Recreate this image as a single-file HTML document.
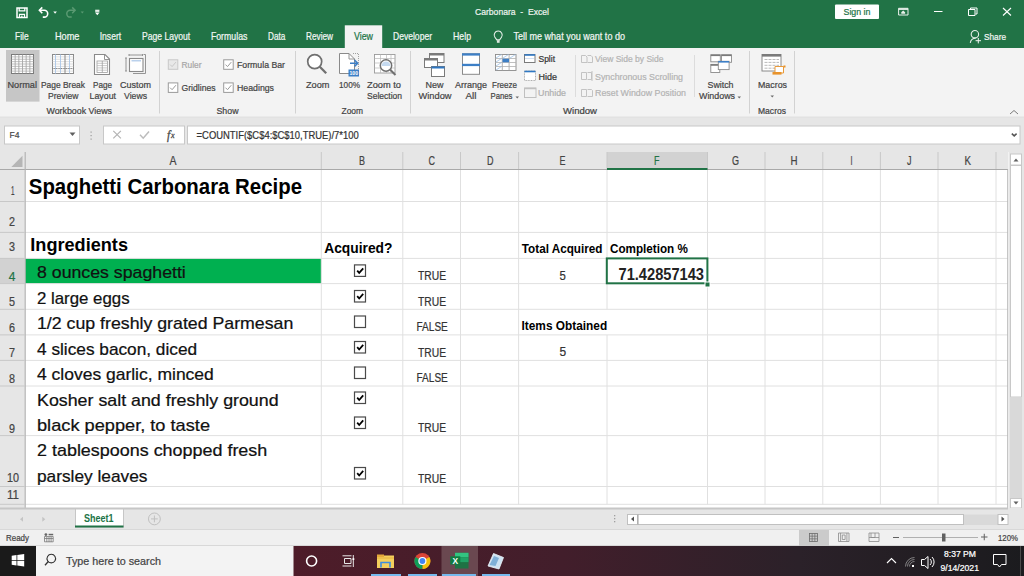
<!DOCTYPE html>
<html><head><meta charset="utf-8"><style>
html,body{margin:0;padding:0;width:1024px;height:576px;overflow:hidden;background:#fff}
svg{display:block;font-family:"Liberation Sans",sans-serif}
</style></head><body>
<svg width="1024" height="576" viewBox="0 0 1024 576">
<rect x="0" y="0" width="1024" height="48" fill="#217346" />
<path d="M17 8h10v9.6h-10z" stroke="#ffffff" fill="none" stroke-width="1.5" />
<path d="M19.2 8v2.8h5.6v-2.8" stroke="#ffffff" fill="none" stroke-width="1.3" />
<path d="M19.5 17.6v-3.3h5v3.3" stroke="#ffffff" fill="none" stroke-width="1.2" />
<rect x="21.2" y="15.6" width="1.3" height="2" fill="#ffffff" />
<path d="M39.5 10.3h4.8a3.4 3.4 0 0 1 0 6.8h-1.5" stroke="#ffffff" fill="none" stroke-width="1.6" />
<path d="M42.3 7.4l-2.9 2.9l2.9 2.9" stroke="#ffffff" fill="none" stroke-width="1.6" />
<path d="M53.3 11.5h3.6l-1.8 2.2z" stroke="none" fill="#ffffff" stroke-width="1" />
<path d="M75 10.3h-4.8a3.4 3.4 0 0 0 0 6.8h1.5" stroke="#5a9a72" fill="none" stroke-width="1.5" />
<path d="M72.2 7.4l2.9 2.9l-2.9 2.9" stroke="#5a9a72" fill="none" stroke-width="1.5" />
<path d="M80.7 11.5h3.2l-1.6 2z" stroke="none" fill="#5a9a72" stroke-width="1" />
<rect x="95.2" y="9.7" width="4.2" height="2.2" fill="#e8f0ea" />
<path d="M95 12.6h4.6l-2.3 2.6z" stroke="none" fill="#ffffff" stroke-width="1" />
<text x="475.00" y="15.00" font-size="9.88" fill="#eef3ef" style="white-space:pre" stroke="#eef3ef" stroke-width="0.22" textLength="74.00" lengthAdjust="spacingAndGlyphs">Carbonara  -  Excel</text>
<rect x="835" y="4.5" width="44" height="14.5" fill="#ffffff" rx="1"/>
<text x="843.50" y="15.20" font-size="9.88" fill="#217346" style="white-space:pre" stroke="#217346" stroke-width="0.22" textLength="27.00" lengthAdjust="spacingAndGlyphs">Sign in</text>
<path d="M898.6 8.3h9.4v6.7h-9.4z" stroke="#e8f0ea" fill="none" stroke-width="1" />
<rect x="898.6" y="8.3" width="9.4" height="1.6" fill="#e8f0ea" />
<path d="M901.3 13.8h3.8v-1.6h-3.8zM903.2 10.6l-2.2 1.8h4.4z" stroke="none" fill="#e8f0ea" stroke-width="1" />
<line x1="934" y1="11.5" x2="942.5" y2="11.5" stroke="#ffffff" stroke-width="1" />
<path d="M968.5 9.5h6.5v6h-6.5z" stroke="#ffffff" fill="none" stroke-width="1" />
<path d="M970.5 9.5v-1.5h6.5v6h-1.5" stroke="#ffffff" fill="none" stroke-width="1" />
<path d="M1003 8l8 7.5M1011 8l-8 7.5" stroke="#ffffff" fill="none" stroke-width="1.1" />
<text x="15.10" y="39.90" font-size="10.17" fill="#f2f6f3" style="white-space:pre" stroke="#f2f6f3" stroke-width="0.22" textLength="13.50" lengthAdjust="spacingAndGlyphs">File</text>
<text x="54.90" y="39.90" font-size="10.17" fill="#f2f6f3" style="white-space:pre" stroke="#f2f6f3" stroke-width="0.22" textLength="24.50" lengthAdjust="spacingAndGlyphs">Home</text>
<text x="99.70" y="39.90" font-size="10.17" fill="#f2f6f3" style="white-space:pre" stroke="#f2f6f3" stroke-width="0.22" textLength="21.50" lengthAdjust="spacingAndGlyphs">Insert</text>
<text x="142.00" y="39.90" font-size="10.17" fill="#f2f6f3" style="white-space:pre" stroke="#f2f6f3" stroke-width="0.22" textLength="48.20" lengthAdjust="spacingAndGlyphs">Page Layout</text>
<text x="210.90" y="39.90" font-size="10.17" fill="#f2f6f3" style="white-space:pre" stroke="#f2f6f3" stroke-width="0.22" textLength="36.50" lengthAdjust="spacingAndGlyphs">Formulas</text>
<text x="268.00" y="39.90" font-size="10.17" fill="#f2f6f3" style="white-space:pre" stroke="#f2f6f3" stroke-width="0.22" textLength="17.30" lengthAdjust="spacingAndGlyphs">Data</text>
<text x="306.00" y="39.90" font-size="10.17" fill="#f2f6f3" style="white-space:pre" stroke="#f2f6f3" stroke-width="0.22" textLength="27.00" lengthAdjust="spacingAndGlyphs">Review</text>
<text x="393.00" y="39.90" font-size="10.17" fill="#f2f6f3" style="white-space:pre" stroke="#f2f6f3" stroke-width="0.22" textLength="39.00" lengthAdjust="spacingAndGlyphs">Developer</text>
<text x="453.00" y="39.90" font-size="10.17" fill="#f2f6f3" style="white-space:pre" stroke="#f2f6f3" stroke-width="0.22" textLength="18.00" lengthAdjust="spacingAndGlyphs">Help</text>
<rect x="344.8" y="25.3" width="37.4" height="23" fill="#f3f3f3" />
<text x="354.00" y="39.90" font-size="10.17" fill="#217346" style="white-space:pre" stroke="#217346" stroke-width="0.22" textLength="19.00" lengthAdjust="spacingAndGlyphs">View</text>
<path d="M498.2 31a4 4 0 0 1 3.3 6.3l-1.9 2.6h-2.8l-1.9-2.6a4 4 0 0 1 3.3-6.3z" stroke="#e6efe9" fill="none" stroke-width="1.1" />
<rect x="496.9" y="40.2" width="2.7" height="2.6" fill="#dfe9e2" />
<text x="513.40" y="39.90" font-size="10.17" fill="#f2f6f3" style="white-space:pre" stroke="#f2f6f3" stroke-width="0.22" textLength="111.60" lengthAdjust="spacingAndGlyphs">Tell me what you want to do</text>
<path d="M974.9 30.5a3.7 3.7 0 1 1 0 7.4a3.7 3.7 0 1 1 0-7.4z" stroke="#e6efe9" fill="none" stroke-width="1.1" />
<path d="M970.3 42.8a5.5 5.5 0 0 1 5.4-4.6" stroke="#e6efe9" fill="none" stroke-width="1.1" />
<path d="M978.3 38v5.4M975.6 40.7h5.4" stroke="#f2f6f3" fill="none" stroke-width="1" />
<text x="984.00" y="39.80" font-size="9.74" fill="#f2f6f3" style="white-space:pre" stroke="#f2f6f3" stroke-width="0.22" textLength="22.00" lengthAdjust="spacingAndGlyphs">Share</text>
<rect x="0" y="48" width="1024" height="69.5" fill="#f3f3f3" />
<line x1="0" y1="117.2" x2="1024" y2="117.2" stroke="#d6d6d6" stroke-width="1" />
<rect x="6" y="50" width="33.5" height="51.6" fill="#c6c6c6" />
<rect x="11.5" y="54.5" width="22" height="19" fill="#ffffff" stroke="#7a7a7a" stroke-width="1"/>
<line x1="15.166666666666666" y1="54.5" x2="15.166666666666666" y2="73.5" stroke="#9a9a9a" stroke-width="0.8" />
<line x1="18.833333333333332" y1="54.5" x2="18.833333333333332" y2="73.5" stroke="#9a9a9a" stroke-width="0.8" />
<line x1="22.5" y1="54.5" x2="22.5" y2="73.5" stroke="#9a9a9a" stroke-width="0.8" />
<line x1="26.166666666666664" y1="54.5" x2="26.166666666666664" y2="73.5" stroke="#9a9a9a" stroke-width="0.8" />
<line x1="29.833333333333332" y1="54.5" x2="29.833333333333332" y2="73.5" stroke="#9a9a9a" stroke-width="0.8" />
<line x1="11.5" y1="56.875" x2="33.5" y2="56.875" stroke="#a8a8a8" stroke-width="0.7" />
<line x1="11.5" y1="59.25" x2="33.5" y2="59.25" stroke="#a8a8a8" stroke-width="0.7" />
<line x1="11.5" y1="61.625" x2="33.5" y2="61.625" stroke="#a8a8a8" stroke-width="0.7" />
<line x1="11.5" y1="64.0" x2="33.5" y2="64.0" stroke="#a8a8a8" stroke-width="0.7" />
<line x1="11.5" y1="66.375" x2="33.5" y2="66.375" stroke="#a8a8a8" stroke-width="0.7" />
<line x1="11.5" y1="68.75" x2="33.5" y2="68.75" stroke="#a8a8a8" stroke-width="0.7" />
<line x1="11.5" y1="71.125" x2="33.5" y2="71.125" stroke="#a8a8a8" stroke-width="0.7" />
<rect x="52.5" y="54.5" width="21" height="19" fill="#ffffff" stroke="#8a8a8a" stroke-width="1"/>
<line x1="52.5" y1="56.875" x2="73.5" y2="56.875" stroke="#c8c8c8" stroke-width="0.6" />
<line x1="52.5" y1="59.25" x2="73.5" y2="59.25" stroke="#c8c8c8" stroke-width="0.6" />
<line x1="52.5" y1="61.625" x2="73.5" y2="61.625" stroke="#c8c8c8" stroke-width="0.6" />
<line x1="52.5" y1="64.0" x2="73.5" y2="64.0" stroke="#c8c8c8" stroke-width="0.6" />
<line x1="52.5" y1="66.375" x2="73.5" y2="66.375" stroke="#c8c8c8" stroke-width="0.6" />
<line x1="52.5" y1="68.75" x2="73.5" y2="68.75" stroke="#c8c8c8" stroke-width="0.6" />
<line x1="52.5" y1="71.125" x2="73.5" y2="71.125" stroke="#c8c8c8" stroke-width="0.6" />
<line x1="55.5" y1="54.5" x2="55.5" y2="73.5" stroke="#a9c6e8" stroke-width="0.9" />
<line x1="60.5" y1="54.5" x2="60.5" y2="73.5" stroke="#a9c6e8" stroke-width="0.9" />
<line x1="69.5" y1="54.5" x2="69.5" y2="73.5" stroke="#a9c6e8" stroke-width="0.9" />
<line x1="65" y1="54.5" x2="65" y2="73.5" stroke="#7a7a7a" stroke-width="0.9" />
<line x1="52.5" y1="68.5" x2="73.5" y2="68.5" stroke="#6a6a6a" stroke-width="0.8" stroke-dasharray="1 0.7"/>
<path d="M94.5 54.5h10.5l4.5 4.5v15.5h-15z" stroke="#8a8a8a" fill="#ffffff" stroke-width="1.1" />
<path d="M104.5 54.5v5h5" stroke="#8a8a8a" fill="none" stroke-width="0.9" />
<rect x="97" y="61" width="10.5" height="11.5" fill="none" stroke="#a0a0a0" stroke-width="0.8"/>
<line x1="97" y1="63.3" x2="107.5" y2="63.3" stroke="#b4b4b4" stroke-width="0.7" />
<line x1="97" y1="65.6" x2="107.5" y2="65.6" stroke="#b4b4b4" stroke-width="0.7" />
<line x1="97" y1="67.9" x2="107.5" y2="67.9" stroke="#b4b4b4" stroke-width="0.7" />
<line x1="97" y1="70.2" x2="107.5" y2="70.2" stroke="#b4b4b4" stroke-width="0.7" />
<line x1="102.3" y1="61" x2="102.3" y2="72.5" stroke="#a0a0a0" stroke-width="0.8" />
<path d="M129 55h13.5M129 54v2M142.5 54v2" stroke="#8a8a8a" fill="none" stroke-width="0.9" />
<path d="M126 58v13M125 58h2M125 71h2" stroke="#8a8a8a" fill="none" stroke-width="0.9" />
<path d="M133 73.5h12.5v-19h-2" stroke="#8a8a8a" fill="none" stroke-width="0.9" />
<rect x="129.5" y="58.5" width="13.5" height="13" fill="#ffffff" stroke="#8a8a8a" stroke-width="1.1"/>
<line x1="131.5" y1="60.8" x2="141" y2="60.8" stroke="#a9c6e8" stroke-width="1.2" />
<text x="7.50" y="87.70" font-size="9.59" fill="#444444" style="white-space:pre" stroke="#444444" stroke-width="0.22" textLength="29.50" lengthAdjust="spacingAndGlyphs">Normal</text>
<text x="41.00" y="87.70" font-size="9.59" fill="#444444" style="white-space:pre" stroke="#444444" stroke-width="0.22" textLength="44.00" lengthAdjust="spacingAndGlyphs">Page Break</text>
<text x="48.00" y="99.40" font-size="9.59" fill="#444444" style="white-space:pre" stroke="#444444" stroke-width="0.22" textLength="30.50" lengthAdjust="spacingAndGlyphs">Preview</text>
<text x="93.00" y="87.70" font-size="9.59" fill="#444444" style="white-space:pre" stroke="#444444" stroke-width="0.22" textLength="19.00" lengthAdjust="spacingAndGlyphs">Page</text>
<text x="89.50" y="99.40" font-size="9.59" fill="#444444" style="white-space:pre" stroke="#444444" stroke-width="0.22" textLength="26.50" lengthAdjust="spacingAndGlyphs">Layout</text>
<text x="120.00" y="87.70" font-size="9.59" fill="#444444" style="white-space:pre" stroke="#444444" stroke-width="0.22" textLength="31.00" lengthAdjust="spacingAndGlyphs">Custom</text>
<text x="124.00" y="99.40" font-size="9.59" fill="#444444" style="white-space:pre" stroke="#444444" stroke-width="0.22" textLength="23.00" lengthAdjust="spacingAndGlyphs">Views</text>
<text x="46.50" y="113.50" font-size="9.01" fill="#444444" style="white-space:pre" stroke="#444444" stroke-width="0.22" textLength="65.50" lengthAdjust="spacingAndGlyphs">Workbook Views</text>
<line x1="159.5" y1="51" x2="159.5" y2="113.5" stroke="#d2d2d2" stroke-width="1" />
<rect x="168.3" y="59.8" width="9.5" height="9.5" fill="#e8e8e8" stroke="#c8c8c8" stroke-width="1"/>
<path d="M170.10000000000002 64.6l2 2l3.8-4.5" stroke="#c8c8c8" fill="none" stroke-width="1" />
<text x="181.50" y="67.80" font-size="9.30" fill="#a6a6a6" style="white-space:pre" stroke="#a6a6a6" stroke-width="0.22" textLength="20.00" lengthAdjust="spacingAndGlyphs">Ruler</text>
<rect x="223.7" y="59.8" width="9.5" height="9.5" fill="#ffffff" stroke="#9a9a9a" stroke-width="1"/>
<path d="M225.5 64.6l2 2l3.8-4.5" stroke="#9a9a9a" fill="none" stroke-width="1" />
<text x="237.00" y="67.80" font-size="9.30" fill="#444444" style="white-space:pre" stroke="#444444" stroke-width="0.22" textLength="48.00" lengthAdjust="spacingAndGlyphs">Formula Bar</text>
<rect x="168.3" y="82.9" width="9.5" height="9.5" fill="#ffffff" stroke="#9a9a9a" stroke-width="1"/>
<path d="M170.10000000000002 87.7l2 2l3.8-4.5" stroke="#9a9a9a" fill="none" stroke-width="1" />
<text x="181.50" y="91.20" font-size="9.30" fill="#444444" style="white-space:pre" stroke="#444444" stroke-width="0.22" textLength="34.10" lengthAdjust="spacingAndGlyphs">Gridlines</text>
<rect x="223.7" y="82.9" width="9.5" height="9.5" fill="#ffffff" stroke="#9a9a9a" stroke-width="1"/>
<path d="M225.5 87.7l2 2l3.8-4.5" stroke="#9a9a9a" fill="none" stroke-width="1" />
<text x="237.00" y="91.20" font-size="9.30" fill="#444444" style="white-space:pre" stroke="#444444" stroke-width="0.22" textLength="37.00" lengthAdjust="spacingAndGlyphs">Headings</text>
<text x="216.50" y="113.50" font-size="9.01" fill="#444444" style="white-space:pre" stroke="#444444" stroke-width="0.22" textLength="22.00" lengthAdjust="spacingAndGlyphs">Show</text>
<line x1="295.5" y1="51" x2="295.5" y2="113.5" stroke="#d2d2d2" stroke-width="1" />
<path d="M314.7 54.6a7 7 0 1 1 0 14a7 7 0 1 1 0-14z" stroke="#707070" fill="#ffffff" stroke-width="1.7" />
<line x1="319.8" y1="66.8" x2="326.2" y2="73.2" stroke="#707070" stroke-width="2.3" />
<path d="M339.5 53.5h9.5l5.5 5.5v14.5h-15z" stroke="#8a8a8a" fill="#ffffff" stroke-width="1" />
<path d="M349 53.5v5.5h5.5" stroke="#8a8a8a" fill="none" stroke-width="0.9" />
<path d="M353 53.5h5.5v15.5" stroke="#8a8a8a" fill="none" stroke-width="0.8" stroke-dasharray="1 1"/>
<path d="M350 63.2h7.5M354.5 60l3.2 3.2l-3.2 3.2" stroke="#3d7fc6" fill="none" stroke-width="1.5" />
<rect x="348.5" y="69.5" width="10.5" height="7" fill="#3d7fc6" />
<text x="353.75" y="75.2" font-size="5" fill="#fff" text-anchor="middle" font-weight="bold">100</text>
<rect x="374.5" y="54.5" width="20.5" height="18.5" fill="#ffffff" stroke="#9a9a9a" stroke-width="0.9"/>
<line x1="380.5" y1="54.5" x2="380.5" y2="73" stroke="#b8b8b8" stroke-width="0.7" />
<line x1="386.5" y1="54.5" x2="386.5" y2="73" stroke="#b8b8b8" stroke-width="0.7" />
<line x1="391" y1="54.5" x2="391" y2="73" stroke="#b8b8b8" stroke-width="0.7" />
<line x1="374.5" y1="58.5" x2="395" y2="58.5" stroke="#b8b8b8" stroke-width="0.7" />
<line x1="374.5" y1="63" x2="395" y2="63" stroke="#b8b8b8" stroke-width="0.7" />
<line x1="374.5" y1="68" x2="395" y2="68" stroke="#b8b8b8" stroke-width="0.7" />
<path d="M386 59.8a5.7 5.7 0 1 1 0 11.4a5.7 5.7 0 1 1 0-11.4z" stroke="#707070" fill="#ffffff" stroke-width="1.5" />
<path d="M381.5 66a4.5 4.5 0 0 1 9 0z" stroke="none" fill="#c5daf0" stroke-width="1" />
<line x1="390.2" y1="69.8" x2="395.5" y2="75" stroke="#707070" stroke-width="2" />
<text x="306.00" y="87.70" font-size="9.59" fill="#444444" style="white-space:pre" stroke="#444444" stroke-width="0.22" textLength="23.50" lengthAdjust="spacingAndGlyphs">Zoom</text>
<text x="339.00" y="87.70" font-size="9.59" fill="#444444" style="white-space:pre" stroke="#444444" stroke-width="0.22" textLength="21.00" lengthAdjust="spacingAndGlyphs">100%</text>
<text x="367.00" y="87.70" font-size="9.59" fill="#444444" style="white-space:pre" stroke="#444444" stroke-width="0.22" textLength="34.00" lengthAdjust="spacingAndGlyphs">Zoom to</text>
<text x="367.00" y="99.40" font-size="9.59" fill="#444444" style="white-space:pre" stroke="#444444" stroke-width="0.22" textLength="35.00" lengthAdjust="spacingAndGlyphs">Selection</text>
<text x="341.50" y="113.50" font-size="9.01" fill="#444444" style="white-space:pre" stroke="#444444" stroke-width="0.22" textLength="21.50" lengthAdjust="spacingAndGlyphs">Zoom</text>
<line x1="410.5" y1="51" x2="410.5" y2="113.5" stroke="#d2d2d2" stroke-width="1" />
<rect x="429.5" y="53.5" width="14.5" height="9" fill="#ffffff" stroke="#7a7a7a" stroke-width="1"/>
<line x1="429.5" y1="54.5" x2="444" y2="54.5" stroke="#7a7a7a" stroke-width="2" />
<rect x="424.5" y="58.5" width="13" height="9" fill="#ffffff" stroke="#7a7a7a" stroke-width="1"/>
<line x1="424.5" y1="59.5" x2="437.5" y2="59.5" stroke="#7a7a7a" stroke-width="2" />
<rect x="431.5" y="66.5" width="13" height="10" fill="#ffffff" stroke="#7a7a7a" stroke-width="1"/>
<line x1="431.5" y1="67.5" x2="444.5" y2="67.5" stroke="#2f78c4" stroke-width="2" />
<text x="425.50" y="87.70" font-size="9.59" fill="#444444" style="white-space:pre" stroke="#444444" stroke-width="0.22" textLength="18.00" lengthAdjust="spacingAndGlyphs">New</text>
<text x="418.50" y="99.40" font-size="9.59" fill="#444444" style="white-space:pre" stroke="#444444" stroke-width="0.22" textLength="33.00" lengthAdjust="spacingAndGlyphs">Window</text>
<rect x="462.5" y="53.8" width="17" height="20.5" fill="#ffffff" stroke="#8a8a8a" stroke-width="1"/>
<rect x="462" y="53.3" width="18" height="2.3" fill="#3d7fc6" />
<rect x="462" y="63.8" width="18" height="2.3" fill="#3d7fc6" />
<text x="455.00" y="87.70" font-size="9.59" fill="#444444" style="white-space:pre" stroke="#444444" stroke-width="0.22" textLength="32.00" lengthAdjust="spacingAndGlyphs">Arrange</text>
<text x="465.50" y="99.40" font-size="9.59" fill="#444444" style="white-space:pre" stroke="#444444" stroke-width="0.22" textLength="11.00" lengthAdjust="spacingAndGlyphs">All</text>
<rect x="495.5" y="54.5" width="20.5" height="16" fill="#ffffff" stroke="#8a8a8a" stroke-width="0.9"/>
<line x1="502.3" y1="54.5" x2="502.3" y2="70.5" stroke="#a0a0a0" stroke-width="0.8" />
<line x1="509.1" y1="54.5" x2="509.1" y2="70.5" stroke="#a0a0a0" stroke-width="0.8" />
<line x1="495.5" y1="58.5" x2="516" y2="58.5" stroke="#b0b0b0" stroke-width="0.8" />
<line x1="495.5" y1="62.5" x2="516" y2="62.5" stroke="#b0b0b0" stroke-width="0.8" />
<line x1="495.5" y1="66.5" x2="516" y2="66.5" stroke="#b0b0b0" stroke-width="0.8" />
<path d="M496 58l5.5-3.5M503 58l5.5-3.5M510 58l5.5-3.5M496 62l5.5-3.5M496 66l5.5-3.5M496 70l5.5-3.5" stroke="#9cc0e6" fill="none" stroke-width="0.8" />
<rect x="502.5" y="58.7" width="6.5" height="3.6" fill="#3d7fc6" />
<text x="492.00" y="87.70" font-size="9.59" fill="#444444" style="white-space:pre" stroke="#444444" stroke-width="0.22" textLength="25.00" lengthAdjust="spacingAndGlyphs">Freeze</text>
<text x="490.50" y="99.40" font-size="9.59" fill="#444444" style="white-space:pre" stroke="#444444" stroke-width="0.22" textLength="22.00" lengthAdjust="spacingAndGlyphs">Panes</text>
<path d="M515.5 96.5h3.5l-1.75 2z" stroke="none" fill="#6a6a6a" stroke-width="1" />
<rect x="524.5" y="54.5" width="10.5" height="8" fill="#ffffff" stroke="#7a7a7a" stroke-width="1"/>
<line x1="524.5" y1="55" x2="535" y2="55" stroke="#2f78c4" stroke-width="1.6" />
<line x1="525.5" y1="58.5" x2="534" y2="58.5" stroke="#8fb4e0" stroke-width="0.8" stroke-dasharray="1 1"/>
<text x="538.50" y="61.70" font-size="9.01" fill="#333333" style="white-space:pre" stroke="#333333" stroke-width="0.22" textLength="16.50" lengthAdjust="spacingAndGlyphs">Split</text>
<rect x="524.5" y="71" width="11" height="9.5" fill="#ffffff" stroke="#9a9a9a" stroke-width="0.8" stroke-dasharray="1 0.6"/>
<line x1="524.5" y1="71.5" x2="535.5" y2="71.5" stroke="#2f78c4" stroke-width="1.6" />
<text x="538.50" y="79.50" font-size="9.01" fill="#333333" style="white-space:pre" stroke="#333333" stroke-width="0.22" textLength="18.50" lengthAdjust="spacingAndGlyphs">Hide</text>
<rect x="524.5" y="88" width="11.5" height="9.5" fill="#f3f3f3" stroke="#c0c0c0" stroke-width="1"/>
<line x1="524.5" y1="88.5" x2="536" y2="88.5" stroke="#c0c0c0" stroke-width="1.5" />
<text x="538.00" y="96.40" font-size="9.01" fill="#b0b0b0" style="white-space:pre" stroke="#b0b0b0" stroke-width="0.22" textLength="28.00" lengthAdjust="spacingAndGlyphs">Unhide</text>
<line x1="575.5" y1="55" x2="575.5" y2="97" stroke="#dcdcdc" stroke-width="1" />
<path d="M581.5 55.5h4l1.5 1.5v5.5h-5.5zM587.5 55.5h3.5l1.5 1.5v5.5h-5" stroke="#bdbdbd" fill="none" stroke-width="0.9" />
<text x="595.00" y="61.70" font-size="9.01" fill="#b4b4b4" style="white-space:pre" stroke="#b4b4b4" stroke-width="0.22" textLength="68.50" lengthAdjust="spacingAndGlyphs">View Side by Side</text>
<path d="M581.5 72.5h5v7h-5zM587.5 72.5h4v7h-4M592 71v10" stroke="#bdbdbd" fill="none" stroke-width="0.9" />
<text x="595.00" y="79.50" font-size="9.01" fill="#b4b4b4" style="white-space:pre" stroke="#b4b4b4" stroke-width="0.22" textLength="88.00" lengthAdjust="spacingAndGlyphs">Synchronous Scrolling</text>
<path d="M581.5 89.5h5v7h-5zM587.5 89.5h4l1 1v6h-5" stroke="#bdbdbd" fill="none" stroke-width="0.9" />
<text x="595.00" y="96.40" font-size="9.01" fill="#b4b4b4" style="white-space:pre" stroke="#b4b4b4" stroke-width="0.22" textLength="91.00" lengthAdjust="spacingAndGlyphs">Reset Window Position</text>
<line x1="694.5" y1="55" x2="694.5" y2="97" stroke="#dcdcdc" stroke-width="1" />
<rect x="710.8" y="54.8" width="9.5" height="7" fill="#ffffff" stroke="#8a8a8a" stroke-width="0.9"/>
<line x1="710.8" y1="55.3" x2="720.3" y2="55.3" stroke="#7a7a7a" stroke-width="1.6" />
<rect x="721.5" y="54.8" width="10" height="7.5" fill="#ffffff" stroke="#8a8a8a" stroke-width="0.9"/>
<line x1="721.5" y1="55.3" x2="731.5" y2="55.3" stroke="#7a7a7a" stroke-width="1.6" />
<rect x="710.8" y="64.5" width="9" height="8" fill="#ffffff" stroke="#8a8a8a" stroke-width="0.9"/>
<line x1="710.8" y1="65" x2="719.8" y2="65" stroke="#7a7a7a" stroke-width="1.6" />
<rect x="718.3" y="61.3" width="10.8" height="8.3" fill="#ffffff" stroke="#8a8a8a" stroke-width="0.9"/>
<line x1="718.3" y1="61.8" x2="729.1" y2="61.8" stroke="#3d7fc6" stroke-width="1.6" />
<text x="707.50" y="87.70" font-size="9.59" fill="#444444" style="white-space:pre" stroke="#444444" stroke-width="0.22" textLength="26.00" lengthAdjust="spacingAndGlyphs">Switch</text>
<text x="699.00" y="99.40" font-size="9.59" fill="#444444" style="white-space:pre" stroke="#444444" stroke-width="0.22" textLength="36.00" lengthAdjust="spacingAndGlyphs">Windows</text>
<path d="M737.5 96.5h3.5l-1.75 2z" stroke="none" fill="#6a6a6a" stroke-width="1" />
<line x1="749.5" y1="51" x2="749.5" y2="113.5" stroke="#d2d2d2" stroke-width="1" />
<text x="563.00" y="113.50" font-size="9.01" fill="#444444" style="white-space:pre" stroke="#444444" stroke-width="0.22" textLength="34.00" lengthAdjust="spacingAndGlyphs">Window</text>
<rect x="762" y="54.5" width="19" height="16.5" fill="#ffffff" stroke="#8a8a8a" stroke-width="1"/>
<rect x="762" y="54" width="19" height="2.6" fill="#7a7a7a" />
<line x1="764.5" y1="59.5" x2="779" y2="59.5" stroke="#a8a8a8" stroke-width="0.8" stroke-dasharray="3 1"/>
<line x1="764.5" y1="62.4" x2="779" y2="62.4" stroke="#a8a8a8" stroke-width="0.8" stroke-dasharray="3 1"/>
<line x1="764.5" y1="65.3" x2="779" y2="65.3" stroke="#a8a8a8" stroke-width="0.8" stroke-dasharray="3 1"/>
<line x1="764.5" y1="68.2" x2="779" y2="68.2" stroke="#a8a8a8" stroke-width="0.8" stroke-dasharray="3 1"/>
<path d="M775 66.5h8.5v6.5h-8.5z" stroke="#e99a3a" fill="#ffffff" stroke-width="1" />
<rect x="772.5" y="72" width="9" height="2.6" fill="#e8932b" />
<rect x="783.5" y="65.5" width="2" height="2" fill="#e8932b" />
<text x="758.00" y="87.70" font-size="9.59" fill="#444444" style="white-space:pre" stroke="#444444" stroke-width="0.22" textLength="29.00" lengthAdjust="spacingAndGlyphs">Macros</text>
<path d="M770.5 95.5h3.5l-1.75 2z" stroke="none" fill="#6a6a6a" stroke-width="1" />
<text x="758.00" y="113.50" font-size="9.01" fill="#444444" style="white-space:pre" stroke="#444444" stroke-width="0.22" textLength="28.00" lengthAdjust="spacingAndGlyphs">Macros</text>
<line x1="794.5" y1="51" x2="794.5" y2="113.5" stroke="#d2d2d2" stroke-width="1" />
<path d="M1010 114l4-3.5l4 3.5" stroke="#7a7a7a" fill="none" stroke-width="1" />
<rect x="0" y="117.7" width="1024" height="34.3" fill="#e6e6e6" />
<rect x="4.5" y="126" width="75" height="18" fill="#ffffff" stroke="#c8c8c8" stroke-width="1"/>
<text x="9.50" y="137.50" font-size="9.59" fill="#444444" style="white-space:pre" stroke="#444444" stroke-width="0.22" textLength="10.00" lengthAdjust="spacingAndGlyphs">F4</text>
<path d="M69.5 132.5h6l-3 3.5z" stroke="none" fill="#606060" stroke-width="1" />
<rect x="90.5" y="131.5" width="1.2" height="1.2" fill="#9a9a9a" />
<rect x="90.5" y="135" width="1.2" height="1.2" fill="#9a9a9a" />
<rect x="90.5" y="138.5" width="1.2" height="1.2" fill="#9a9a9a" />
<rect x="103.5" y="126" width="81" height="18" fill="#ffffff" stroke="#c8c8c8" stroke-width="1"/>
<path d="M113.3 130.8l7.6 7.6M120.9 130.8l-7.6 7.6" stroke="#b4b4b4" fill="none" stroke-width="1.2" />
<path d="M140 134.8l3.2 3.4l5.8-6.6" stroke="#bcbcbc" fill="none" stroke-width="1.5" />
<text x="167" y="138.8" font-size="11.5" fill="#4a4a4a" font-style="italic" font-family="Liberation Serif" stroke="#4a4a4a" stroke-width="0.3">f</text>
<text x="171" y="138.3" font-size="8" fill="#4a4a4a" font-style="italic" font-family="Liberation Serif" stroke="#4a4a4a" stroke-width="0.3">x</text>
<rect x="187.5" y="126" width="832.5" height="18" fill="#ffffff" stroke="#c8c8c8" stroke-width="1"/>
<text x="196.60" y="139.40" font-size="10.47" fill="#333333" style="white-space:pre" stroke="#333333" stroke-width="0.22" textLength="162.10" lengthAdjust="spacingAndGlyphs">=COUNTIF($C$4:$C$10,TRUE)/7*100</text>
<path d="M1011.8 133.6l2.4 2.3l2.4-2.3" stroke="#555555" fill="none" stroke-width="1.5" />
<rect x="0" y="152" width="1008" height="18" fill="#e6e6e6" />
<rect x="0" y="170" width="25" height="338" fill="#e6e6e6" />
<rect x="25" y="170" width="983" height="338" fill="#ffffff" />
<rect x="607" y="152" width="100.5" height="18" fill="#d2d2d2" />
<rect x="0" y="258.4" width="24.5" height="25.2" fill="#d2d2d2" />
<path d="M11.3 167l11.2-11.2v11.2z" stroke="none" fill="#b5b5b5" stroke-width="1" />
<rect x="25" y="258.4" width="296.3" height="25.2" fill="#00b050" />
<line x1="321.3" y1="170" x2="321.3" y2="504.5" stroke="#e0e0e0" stroke-width="1" />
<line x1="402.8" y1="170" x2="402.8" y2="504.5" stroke="#e0e0e0" stroke-width="1" />
<line x1="460.5" y1="170" x2="460.5" y2="504.5" stroke="#e0e0e0" stroke-width="1" />
<line x1="518.6" y1="170" x2="518.6" y2="504.5" stroke="#e0e0e0" stroke-width="1" />
<line x1="607" y1="170" x2="607" y2="309.3" stroke="#e0e0e0" stroke-width="1" />
<line x1="607" y1="334.9" x2="607" y2="504.5" stroke="#e0e0e0" stroke-width="1" />
<line x1="707.5" y1="170" x2="707.5" y2="504.5" stroke="#e0e0e0" stroke-width="1" />
<line x1="765" y1="170" x2="765" y2="504.5" stroke="#e0e0e0" stroke-width="1" />
<line x1="822.8" y1="170" x2="822.8" y2="504.5" stroke="#e0e0e0" stroke-width="1" />
<line x1="880.4" y1="170" x2="880.4" y2="504.5" stroke="#e0e0e0" stroke-width="1" />
<line x1="938" y1="170" x2="938" y2="504.5" stroke="#e0e0e0" stroke-width="1" />
<line x1="996" y1="170" x2="996" y2="504.5" stroke="#e0e0e0" stroke-width="1" />
<line x1="25" y1="201.5" x2="1008" y2="201.5" stroke="#e0e0e0" stroke-width="1" />
<line x1="25" y1="232.4" x2="1008" y2="232.4" stroke="#e0e0e0" stroke-width="1" />
<line x1="25" y1="258.4" x2="1008" y2="258.4" stroke="#e0e0e0" stroke-width="1" />
<line x1="25" y1="283.6" x2="1008" y2="283.6" stroke="#e0e0e0" stroke-width="1" />
<line x1="25" y1="309.3" x2="1008" y2="309.3" stroke="#e0e0e0" stroke-width="1" />
<line x1="25" y1="334.9" x2="1008" y2="334.9" stroke="#e0e0e0" stroke-width="1" />
<line x1="25" y1="360.4" x2="1008" y2="360.4" stroke="#e0e0e0" stroke-width="1" />
<line x1="25" y1="386" x2="1008" y2="386" stroke="#e0e0e0" stroke-width="1" />
<line x1="25" y1="435.6" x2="1008" y2="435.6" stroke="#e0e0e0" stroke-width="1" />
<line x1="25" y1="486.5" x2="1008" y2="486.5" stroke="#e0e0e0" stroke-width="1" />
<line x1="25" y1="504.3" x2="1008" y2="504.3" stroke="#e0e0e0" stroke-width="1" />
<line x1="321.3" y1="152" x2="321.3" y2="169.5" stroke="#c8c8c8" stroke-width="1" />
<line x1="402.8" y1="152" x2="402.8" y2="169.5" stroke="#c8c8c8" stroke-width="1" />
<line x1="460.5" y1="152" x2="460.5" y2="169.5" stroke="#c8c8c8" stroke-width="1" />
<line x1="518.6" y1="152" x2="518.6" y2="169.5" stroke="#c8c8c8" stroke-width="1" />
<line x1="607" y1="152" x2="607" y2="169.5" stroke="#c8c8c8" stroke-width="1" />
<line x1="707.5" y1="152" x2="707.5" y2="169.5" stroke="#c8c8c8" stroke-width="1" />
<line x1="765" y1="152" x2="765" y2="169.5" stroke="#c8c8c8" stroke-width="1" />
<line x1="822.8" y1="152" x2="822.8" y2="169.5" stroke="#c8c8c8" stroke-width="1" />
<line x1="880.4" y1="152" x2="880.4" y2="169.5" stroke="#c8c8c8" stroke-width="1" />
<line x1="938" y1="152" x2="938" y2="169.5" stroke="#c8c8c8" stroke-width="1" />
<line x1="996" y1="152" x2="996" y2="169.5" stroke="#c8c8c8" stroke-width="1" />
<line x1="0" y1="201.5" x2="24.5" y2="201.5" stroke="#c8c8c8" stroke-width="1" />
<line x1="0" y1="232.4" x2="24.5" y2="232.4" stroke="#c8c8c8" stroke-width="1" />
<line x1="0" y1="258.4" x2="24.5" y2="258.4" stroke="#c8c8c8" stroke-width="1" />
<line x1="0" y1="283.6" x2="24.5" y2="283.6" stroke="#c8c8c8" stroke-width="1" />
<line x1="0" y1="309.3" x2="24.5" y2="309.3" stroke="#c8c8c8" stroke-width="1" />
<line x1="0" y1="334.9" x2="24.5" y2="334.9" stroke="#c8c8c8" stroke-width="1" />
<line x1="0" y1="360.4" x2="24.5" y2="360.4" stroke="#c8c8c8" stroke-width="1" />
<line x1="0" y1="386" x2="24.5" y2="386" stroke="#c8c8c8" stroke-width="1" />
<line x1="0" y1="435.6" x2="24.5" y2="435.6" stroke="#c8c8c8" stroke-width="1" />
<line x1="0" y1="486.5" x2="24.5" y2="486.5" stroke="#c8c8c8" stroke-width="1" />
<line x1="0" y1="504.3" x2="24.5" y2="504.3" stroke="#c8c8c8" stroke-width="1" />
<line x1="0" y1="169.5" x2="1008" y2="169.5" stroke="#a9a9a9" stroke-width="1" />
<line x1="25.2" y1="152" x2="25.2" y2="508" stroke="#b4b4b4" stroke-width="1.2" />
<line x1="607" y1="169" x2="707.5" y2="169" stroke="#217346" stroke-width="2" />
<line x1="1007.7" y1="169.5" x2="1007.7" y2="508" stroke="#b8b8b8" stroke-width="1" />
<text x="169.50" y="165.00" font-size="11.92" fill="#444444" style="white-space:pre" stroke="#444444" stroke-width="0.22" textLength="7.00" lengthAdjust="spacingAndGlyphs">A</text>
<text x="359.00" y="165.00" font-size="11.92" fill="#444444" style="white-space:pre" stroke="#444444" stroke-width="0.22" textLength="6.00" lengthAdjust="spacingAndGlyphs">B</text>
<text x="428.50" y="165.00" font-size="11.92" fill="#444444" style="white-space:pre" stroke="#444444" stroke-width="0.22" textLength="6.50" lengthAdjust="spacingAndGlyphs">C</text>
<text x="487.00" y="165.00" font-size="11.92" fill="#444444" style="white-space:pre" stroke="#444444" stroke-width="0.22" textLength="6.50" lengthAdjust="spacingAndGlyphs">D</text>
<text x="559.50" y="165.00" font-size="11.92" fill="#444444" style="white-space:pre" stroke="#444444" stroke-width="0.22" textLength="6.00" lengthAdjust="spacingAndGlyphs">E</text>
<text x="654.00" y="165.00" font-size="11.92" fill="#217346" style="white-space:pre" stroke="#217346" stroke-width="0.22" textLength="5.50" lengthAdjust="spacingAndGlyphs">F</text>
<text x="732.00" y="165.00" font-size="11.92" fill="#444444" style="white-space:pre" stroke="#444444" stroke-width="0.22" textLength="7.00" lengthAdjust="spacingAndGlyphs">G</text>
<text x="790.50" y="165.00" font-size="11.92" fill="#444444" style="white-space:pre" stroke="#444444" stroke-width="0.22" textLength="7.00" lengthAdjust="spacingAndGlyphs">H</text>
<text x="850.50" y="165.00" font-size="11.92" fill="#444444" style="white-space:pre" stroke="#444444" stroke-width="0.22" textLength="2.00" lengthAdjust="spacingAndGlyphs">I</text>
<text x="907.00" y="165.00" font-size="11.92" fill="#444444" style="white-space:pre" stroke="#444444" stroke-width="0.22" textLength="4.50" lengthAdjust="spacingAndGlyphs">J</text>
<text x="964.50" y="165.00" font-size="11.92" fill="#444444" style="white-space:pre" stroke="#444444" stroke-width="0.22" textLength="6.50" lengthAdjust="spacingAndGlyphs">K</text>
<text x="11.00" y="194.50" font-size="11.92" fill="#444444" style="white-space:pre" stroke="#444444" stroke-width="0.22" textLength="3.50" lengthAdjust="spacingAndGlyphs">1</text>
<text x="9.00" y="225.50" font-size="11.92" fill="#444444" style="white-space:pre" stroke="#444444" stroke-width="0.22" textLength="6.00" lengthAdjust="spacingAndGlyphs">2</text>
<text x="9.00" y="251.20" font-size="11.92" fill="#444444" style="white-space:pre" stroke="#444444" stroke-width="0.22" textLength="6.00" lengthAdjust="spacingAndGlyphs">3</text>
<text x="8.70" y="280.50" font-size="11.92" fill="#217346" style="white-space:pre" stroke="#217346" stroke-width="0.22" textLength="6.60" lengthAdjust="spacingAndGlyphs">4</text>
<text x="9.00" y="306.00" font-size="11.92" fill="#444444" style="white-space:pre" stroke="#444444" stroke-width="0.22" textLength="6.00" lengthAdjust="spacingAndGlyphs">5</text>
<text x="9.00" y="331.50" font-size="11.92" fill="#444444" style="white-space:pre" stroke="#444444" stroke-width="0.22" textLength="6.00" lengthAdjust="spacingAndGlyphs">6</text>
<text x="9.00" y="357.00" font-size="11.92" fill="#444444" style="white-space:pre" stroke="#444444" stroke-width="0.22" textLength="6.00" lengthAdjust="spacingAndGlyphs">7</text>
<text x="9.00" y="382.50" font-size="11.92" fill="#444444" style="white-space:pre" stroke="#444444" stroke-width="0.22" textLength="6.00" lengthAdjust="spacingAndGlyphs">8</text>
<text x="9.00" y="432.50" font-size="11.92" fill="#444444" style="white-space:pre" stroke="#444444" stroke-width="0.22" textLength="6.00" lengthAdjust="spacingAndGlyphs">9</text>
<text x="7.00" y="481.60" font-size="11.92" fill="#444444" style="white-space:pre" stroke="#444444" stroke-width="0.22" textLength="12.00" lengthAdjust="spacingAndGlyphs">10</text>
<text x="7.00" y="499.00" font-size="11.92" fill="#444444" style="white-space:pre" stroke="#444444" stroke-width="0.22" textLength="12.00" lengthAdjust="spacingAndGlyphs">11</text>
<rect x="606.8" y="258.4" width="100.6" height="24.9" fill="none" stroke="#217346" stroke-width="2"/>
<rect x="705" y="282" width="5" height="5" fill="#217346" stroke="#ffffff" stroke-width="1"/>
<text x="28.80" y="193.90" font-size="21.80" fill="#000000" style="white-space:pre" font-weight="bold" textLength="273.20" lengthAdjust="spacingAndGlyphs">Spaghetti Carbonara Recipe</text>
<text x="30.30" y="250.60" font-size="18.31" fill="#000000" style="white-space:pre" font-weight="bold" textLength="97.70" lengthAdjust="spacingAndGlyphs">Ingredients</text>
<text x="324.20" y="252.60" font-size="15.41" fill="#000000" style="white-space:pre" font-weight="bold" textLength="68.30" lengthAdjust="spacingAndGlyphs">Acquired?</text>
<text x="521.80" y="252.50" font-size="12.21" fill="#000000" style="white-space:pre" font-weight="bold" textLength="80.70" lengthAdjust="spacingAndGlyphs">Total Acquired</text>
<text x="610.00" y="252.50" font-size="12.21" fill="#000000" style="white-space:pre" font-weight="bold" textLength="77.90" lengthAdjust="spacingAndGlyphs">Completion %</text>
<text x="521.50" y="330.30" font-size="12.21" fill="#000000" style="white-space:pre" font-weight="bold" textLength="85.70" lengthAdjust="spacingAndGlyphs">Items Obtained</text>
<text x="37.00" y="278.20" font-size="15.99" fill="#111111" style="white-space:pre" stroke="#111111" stroke-width="0.22" textLength="148.80" lengthAdjust="spacingAndGlyphs">8 ounces spaghetti</text>
<text x="37.00" y="303.70" font-size="15.99" fill="#111111" style="white-space:pre" stroke="#111111" stroke-width="0.22" textLength="92.60" lengthAdjust="spacingAndGlyphs">2 large eggs</text>
<text x="37.00" y="329.40" font-size="15.99" fill="#111111" style="white-space:pre" stroke="#111111" stroke-width="0.22" textLength="256.30" lengthAdjust="spacingAndGlyphs">1/2 cup freshly grated Parmesan</text>
<text x="37.00" y="354.50" font-size="15.99" fill="#111111" style="white-space:pre" stroke="#111111" stroke-width="0.22" textLength="160.10" lengthAdjust="spacingAndGlyphs">4 slices bacon, diced</text>
<text x="37.00" y="379.90" font-size="15.99" fill="#111111" style="white-space:pre" stroke="#111111" stroke-width="0.22" textLength="176.80" lengthAdjust="spacingAndGlyphs">4 cloves garlic, minced</text>
<text x="37.00" y="405.90" font-size="15.99" fill="#111111" style="white-space:pre" stroke="#111111" stroke-width="0.22" textLength="241.60" lengthAdjust="spacingAndGlyphs">Kosher salt and freshly ground</text>
<text x="37.00" y="431.10" font-size="15.99" fill="#111111" style="white-space:pre" stroke="#111111" stroke-width="0.22" textLength="173.00" lengthAdjust="spacingAndGlyphs">black pepper, to taste</text>
<text x="37.00" y="456.40" font-size="15.99" fill="#111111" style="white-space:pre" stroke="#111111" stroke-width="0.22" textLength="230.30" lengthAdjust="spacingAndGlyphs">2 tablespoons chopped fresh</text>
<text x="37.00" y="481.90" font-size="15.99" fill="#111111" style="white-space:pre" stroke="#111111" stroke-width="0.22" textLength="110.50" lengthAdjust="spacingAndGlyphs">parsley leaves</text>
<rect x="354.5" y="264.9" width="11" height="11.5" fill="#ffffff" stroke="#4a4a4a" stroke-width="1.2"/>
<path d="M357.2 270.59999999999997l2 2.3l4-4.6" stroke="#000" fill="none" stroke-width="1.8" />
<rect x="354.5" y="290.5" width="11" height="11.5" fill="#ffffff" stroke="#4a4a4a" stroke-width="1.2"/>
<path d="M357.2 296.2l2 2.3l4-4.6" stroke="#000" fill="none" stroke-width="1.8" />
<rect x="354.5" y="316.0" width="11" height="11.5" fill="#ffffff" stroke="#4a4a4a" stroke-width="1.2"/>
<rect x="354.5" y="341.5" width="11" height="11.5" fill="#ffffff" stroke="#4a4a4a" stroke-width="1.2"/>
<path d="M357.2 347.2l2 2.3l4-4.6" stroke="#000" fill="none" stroke-width="1.8" />
<rect x="354.5" y="367.0" width="11" height="11.5" fill="#ffffff" stroke="#4a4a4a" stroke-width="1.2"/>
<rect x="354.5" y="392.0" width="11" height="11.5" fill="#ffffff" stroke="#4a4a4a" stroke-width="1.2"/>
<path d="M357.2 397.7l2 2.3l4-4.6" stroke="#000" fill="none" stroke-width="1.8" />
<rect x="354.5" y="417.0" width="11" height="11.5" fill="#ffffff" stroke="#4a4a4a" stroke-width="1.2"/>
<path d="M357.2 422.7l2 2.3l4-4.6" stroke="#000" fill="none" stroke-width="1.8" />
<rect x="354.5" y="467.5" width="11" height="11.5" fill="#ffffff" stroke="#4a4a4a" stroke-width="1.2"/>
<path d="M357.2 473.2l2 2.3l4-4.6" stroke="#000" fill="none" stroke-width="1.8" />
<text x="418.00" y="280.40" font-size="12.35" fill="#333333" style="white-space:pre" stroke="#333333" stroke-width="0.22" textLength="28.10" lengthAdjust="spacingAndGlyphs">TRUE</text>
<text x="418.00" y="305.70" font-size="12.35" fill="#333333" style="white-space:pre" stroke="#333333" stroke-width="0.22" textLength="28.10" lengthAdjust="spacingAndGlyphs">TRUE</text>
<text x="416.50" y="331.10" font-size="12.35" fill="#333333" style="white-space:pre" stroke="#333333" stroke-width="0.22" textLength="31.30" lengthAdjust="spacingAndGlyphs">FALSE</text>
<text x="418.00" y="356.60" font-size="12.35" fill="#333333" style="white-space:pre" stroke="#333333" stroke-width="0.22" textLength="28.10" lengthAdjust="spacingAndGlyphs">TRUE</text>
<text x="416.50" y="382.00" font-size="12.35" fill="#333333" style="white-space:pre" stroke="#333333" stroke-width="0.22" textLength="31.30" lengthAdjust="spacingAndGlyphs">FALSE</text>
<text x="418.00" y="432.30" font-size="12.35" fill="#333333" style="white-space:pre" stroke="#333333" stroke-width="0.22" textLength="28.10" lengthAdjust="spacingAndGlyphs">TRUE</text>
<text x="418.00" y="482.60" font-size="12.35" fill="#333333" style="white-space:pre" stroke="#333333" stroke-width="0.22" textLength="28.10" lengthAdjust="spacingAndGlyphs">TRUE</text>
<text x="559.50" y="279.50" font-size="12.79" fill="#333333" style="white-space:pre" stroke="#333333" stroke-width="0.22" textLength="6.30" lengthAdjust="spacingAndGlyphs">5</text>
<text x="559.60" y="356.10" font-size="12.79" fill="#333333" style="white-space:pre" stroke="#333333" stroke-width="0.22" textLength="6.65" lengthAdjust="spacingAndGlyphs">5</text>
<text x="618.50" y="279.50" font-size="15.70" fill="#222222" style="white-space:pre" font-weight="bold" textLength="85.50" lengthAdjust="spacingAndGlyphs">71.42857143</text>
<rect x="1008.5" y="152" width="15.5" height="356" fill="#e6e6e6" />
<rect x="1010.5" y="154" width="11" height="11" fill="#ffffff" stroke="#c8c8c8" stroke-width="1"/>
<path d="M1013.5 161.5h5l-2.5-3z" stroke="none" fill="#606060" stroke-width="1" />
<rect x="1010.5" y="165.5" width="11" height="231.5" fill="#ffffff" stroke="#c8c8c8" stroke-width="1"/>
<rect x="1010" y="397.5" width="12" height="101" fill="#d9d9d9" />
<rect x="1010.5" y="498.5" width="11" height="9.5" fill="#ffffff" stroke="#c8c8c8" stroke-width="1"/>
<path d="M1013.5 501.5h5l-2.5 3z" stroke="none" fill="#606060" stroke-width="1" />
<rect x="0" y="508" width="1024" height="21" fill="#e6e6e6" />
<line x1="0" y1="508.5" x2="1008" y2="508.5" stroke="#c6c6c6" stroke-width="2" />
<path d="M23 516.8v5l-3-2.5z" stroke="none" fill="#c4c4c4" stroke-width="1" />
<path d="M42.3 516.8v5l3-2.5z" stroke="none" fill="#c4c4c4" stroke-width="1" />
<rect x="75.5" y="509" width="48" height="18" fill="#ffffff" stroke="#c6c6c6" stroke-width="1"/>
<line x1="75" y1="526.5" x2="123.5" y2="526.5" stroke="#217346" stroke-width="2" />
<text x="84.00" y="522.00" font-size="10.17" fill="#217346" style="white-space:pre" font-weight="bold" textLength="29.50" lengthAdjust="spacingAndGlyphs">Sheet1</text>
<path d="M154.4 513a5.9 5.9 0 1 1 0 11.8a5.9 5.9 0 1 1 0-11.8z" stroke="#c0c0c0" fill="none" stroke-width="1" />
<path d="M154.4 515.5v6.8M151 518.9h6.8" stroke="#c0c0c0" fill="none" stroke-width="1" />
<rect x="614" y="515" width="1.3" height="1.3" fill="#a0a0a0" />
<rect x="614" y="518" width="1.3" height="1.3" fill="#a0a0a0" />
<rect x="614" y="521" width="1.3" height="1.3" fill="#a0a0a0" />
<rect x="627.5" y="514.5" width="10" height="10" fill="#ffffff" stroke="#c0c0c0" stroke-width="1"/>
<path d="M634 516.5v5l-3-2.5z" stroke="none" fill="#505050" stroke-width="1" />
<rect x="637.5" y="514.5" width="326" height="10" fill="#ffffff" stroke="#c0c0c0" stroke-width="1"/>
<line x1="638" y1="514.5" x2="638" y2="524.5" stroke="#a0a0a0" stroke-width="1" />
<rect x="964" y="514.5" width="34" height="10.5" fill="#d9d9d9" />
<rect x="998" y="514.5" width="10" height="10" fill="#ffffff" stroke="#c0c0c0" stroke-width="1"/>
<path d="M1001.5 516.5v5l3-2.5z" stroke="none" fill="#505050" stroke-width="1" />
<rect x="0" y="529" width="1024" height="17" fill="#f0f0f0" />
<line x1="0" y1="529.5" x2="1024" y2="529.5" stroke="#d8d8d8" stroke-width="1" />
<line x1="0" y1="545.5" x2="1024" y2="545.5" stroke="#d8d8d8" stroke-width="1" />
<text x="6.00" y="540.80" font-size="9.30" fill="#444444" style="white-space:pre" stroke="#444444" stroke-width="0.22" textLength="23.00" lengthAdjust="spacingAndGlyphs">Ready</text>
<circle cx="45.9" cy="534.6" r="1.4" fill="#666"/>
<rect x="48.6" y="533.8" width="4.6" height="1.5" fill="#666" />
<path d="M44.5 536.5h8.7v5.3h-8.7zM46.8 537v5M49 537v5M51.1 537v5M44.5 538.5h8.7" stroke="#7a7a7a" fill="none" stroke-width="0.8" />
<rect x="799" y="530" width="30" height="16" fill="#cbcbcb" />
<rect x="809.5" y="533.5" width="8" height="8" fill="none" stroke="#6a6a6a" stroke-width="0.8"/>
<line x1="812.17" y1="533.5" x2="812.17" y2="541.5" stroke="#6a6a6a" stroke-width="0.7" />
<line x1="809.5" y1="536.17" x2="817.5" y2="536.17" stroke="#6a6a6a" stroke-width="0.7" />
<line x1="814.84" y1="533.5" x2="814.84" y2="541.5" stroke="#6a6a6a" stroke-width="0.7" />
<line x1="809.5" y1="538.84" x2="817.5" y2="538.84" stroke="#6a6a6a" stroke-width="0.7" />
<path d="M838.5 533h10.5v8.5h-10.5zM840.6 533v8.5M846.9 533v8.5M842.3 535h2.8v4.5h-2.8z" stroke="#8a8a8a" fill="none" stroke-width="0.8" />
<path d="M869 533h10v8.5h-10zM871 533v4.5h4v-4.5M869 537.5h10" stroke="#8a8a8a" fill="none" stroke-width="0.8" />
<line x1="893" y1="537.5" x2="899" y2="537.5" stroke="#606060" stroke-width="1" />
<line x1="903" y1="537.5" x2="978" y2="537.5" stroke="#b0b0b0" stroke-width="1" />
<rect x="942" y="533.5" width="3.5" height="8" fill="#606060" />
<path d="M981 537h6.5M984.25 533.75v6.5" stroke="#606060" fill="none" stroke-width="1" />
<text x="998.00" y="540.60" font-size="9.30" fill="#444444" style="white-space:pre" stroke="#444444" stroke-width="0.22" textLength="20.00" lengthAdjust="spacingAndGlyphs">120%</text>
<defs><linearGradient id="tb" gradientUnits="userSpaceOnUse" x1="0" x2="1024" y1="0" y2="0"><stop offset="0.28" stop-color="#4e1c29"/><stop offset="0.55" stop-color="#421e2b"/><stop offset="0.78" stop-color="#2b2129"/><stop offset="1" stop-color="#1b1b1e"/></linearGradient></defs>
<rect x="0" y="546" width="1024" height="30" fill="url(#tb)" />
<rect x="0" y="546" width="36" height="30" fill="#1a1a1a" />
<path d="M11.7 555.8l4.8-.7v4.8h-4.8zM17.3 555l6.9-1v5.9h-6.9zM11.7 560.7h4.8v4.8l-4.8-.7zM17.3 560.7h6.9v5.9l-6.9-1z" stroke="none" fill="#ffffff" stroke-width="1" />
<rect x="36" y="546" width="257.5" height="30" fill="#f3f3f3" />
<path d="M51.3 554.3a4.3 4.3 0 1 1 -0.01 0z" stroke="#333" fill="none" stroke-width="1.1" />
<path d="M48.3 561.5l-3.3 3.8" stroke="#333" fill="none" stroke-width="1.3" />
<text x="66.00" y="565.20" font-size="10.76" fill="#444444" style="white-space:pre" stroke="#444444" stroke-width="0.22" textLength="95.00" lengthAdjust="spacingAndGlyphs">Type here to search</text>
<path d="M311.6 556a5 5 0 1 1 0 10a5 5 0 1 1 0-10z" stroke="#ffffff" fill="none" stroke-width="1.6" />
<path d="M342.5 555.8h9M342.5 566h9M344.5 558.5h6.5v5h-6.5zM353.3 555v12" stroke="#e8e8e8" fill="none" stroke-width="1" />
<rect x="352.5" y="558.2" width="1.8" height="1.8" fill="#ffffff" />
<rect x="377" y="555.5" width="17" height="12.5" fill="#f5cf5c" />
<rect x="377" y="554.5" width="7" height="2.5" fill="#e5a93a" />
<rect x="377" y="557.5" width="17" height="1" fill="#e5b23f" />
<path d="M381 567.5v-5h9v5" stroke="#3d8de0" fill="none" stroke-width="1.6" />
<path d="M422.4 553a8 8 0 1 1 0 16a8 8 0 1 1 0-16z" stroke="none" fill="#db4437" stroke-width="1" />
<path d="M422.4 561l6.93-4a8 8 0 0 1-6.93 12z" stroke="none" fill="#f4c20d" stroke-width="1" />
<path d="M422.4 561l0 8a8 8 0 0 1-6.93-12z" stroke="none" fill="#0f9d58" stroke-width="1" />
<path d="M422.4 557.5a3.5 3.5 0 1 1 0 7a3.5 3.5 0 1 1 0-7z" stroke="#ffffff" fill="#4285f4" stroke-width="1.2" />
<rect x="441.5" y="546" width="36.5" height="30" fill="#6a4850" />
<rect x="455" y="552.8" width="13.5" height="15.7" fill="#1f7244" />
<rect x="455" y="552.8" width="13.5" height="4.5" fill="#33c481" />
<rect x="455" y="557.3" width="13.5" height="4.8" fill="#21a366" />
<rect x="450.3" y="556.3" width="10" height="8.2" fill="#107c41" />
<text x="455.3" y="563.6" font-size="8.4" fill="#fff" font-weight="bold" text-anchor="middle">X</text>
<path d="M488 566l5.5-12.5l10 4l-4.5 11.5z" stroke="#eef6fb" fill="#cfe3f3" stroke-width="0.8" />
<path d="M489.5 565l4.5-9l5 2l-3.5 8z" stroke="none" fill="#7fb0d8" stroke-width="1" />
<rect x="371" y="574" width="30" height="2" fill="#76b9ed" />
<rect x="408" y="574" width="29" height="2" fill="#76b9ed" />
<rect x="442" y="574" width="34" height="2" fill="#76b9ed" />
<rect x="482" y="574" width="28" height="2" fill="#76b9ed" />
<path d="M887 563l4.5-4.5l4.5 4.5" stroke="#ffffff" fill="none" stroke-width="1.1" />
<path d="M905.5 566.5a9 9 0 0 1 9-9M907.5 566.5a7 7 0 0 1 7-7M909.5 566.5a5 5 0 0 1 5-5" stroke="#9a9a9a" fill="none" stroke-width="0.8" />
<rect x="912" y="565" width="2" height="2" fill="#ffffff" />
<path d="M921.5 559.5h3l3.5-3v12l-3.5-3h-3z" stroke="#ffffff" fill="none" stroke-width="1" />
<path d="M930 559a4 4 0 0 1 0 6M932 557a7 7 0 0 1 0 10" stroke="#ffffff" fill="none" stroke-width="1" />
<text x="944.00" y="556.80" font-size="8.43" fill="#ffffff" style="white-space:pre" stroke="#ffffff" stroke-width="0.22" textLength="32.00" lengthAdjust="spacingAndGlyphs">8:37 PM</text>
<text x="940.50" y="570.80" font-size="8.43" fill="#ffffff" style="white-space:pre" stroke="#ffffff" stroke-width="0.22" textLength="38.50" lengthAdjust="spacingAndGlyphs">9/14/2021</text>
<path d="M993.5 554.5h12.5v10h-4.5l-2 2.5l-2-2.5h-4z" stroke="#ffffff" fill="none" stroke-width="1" />
<line x1="1020.5" y1="546" x2="1020.5" y2="576" stroke="#4a4a4a" stroke-width="1" />
</svg></body></html>
